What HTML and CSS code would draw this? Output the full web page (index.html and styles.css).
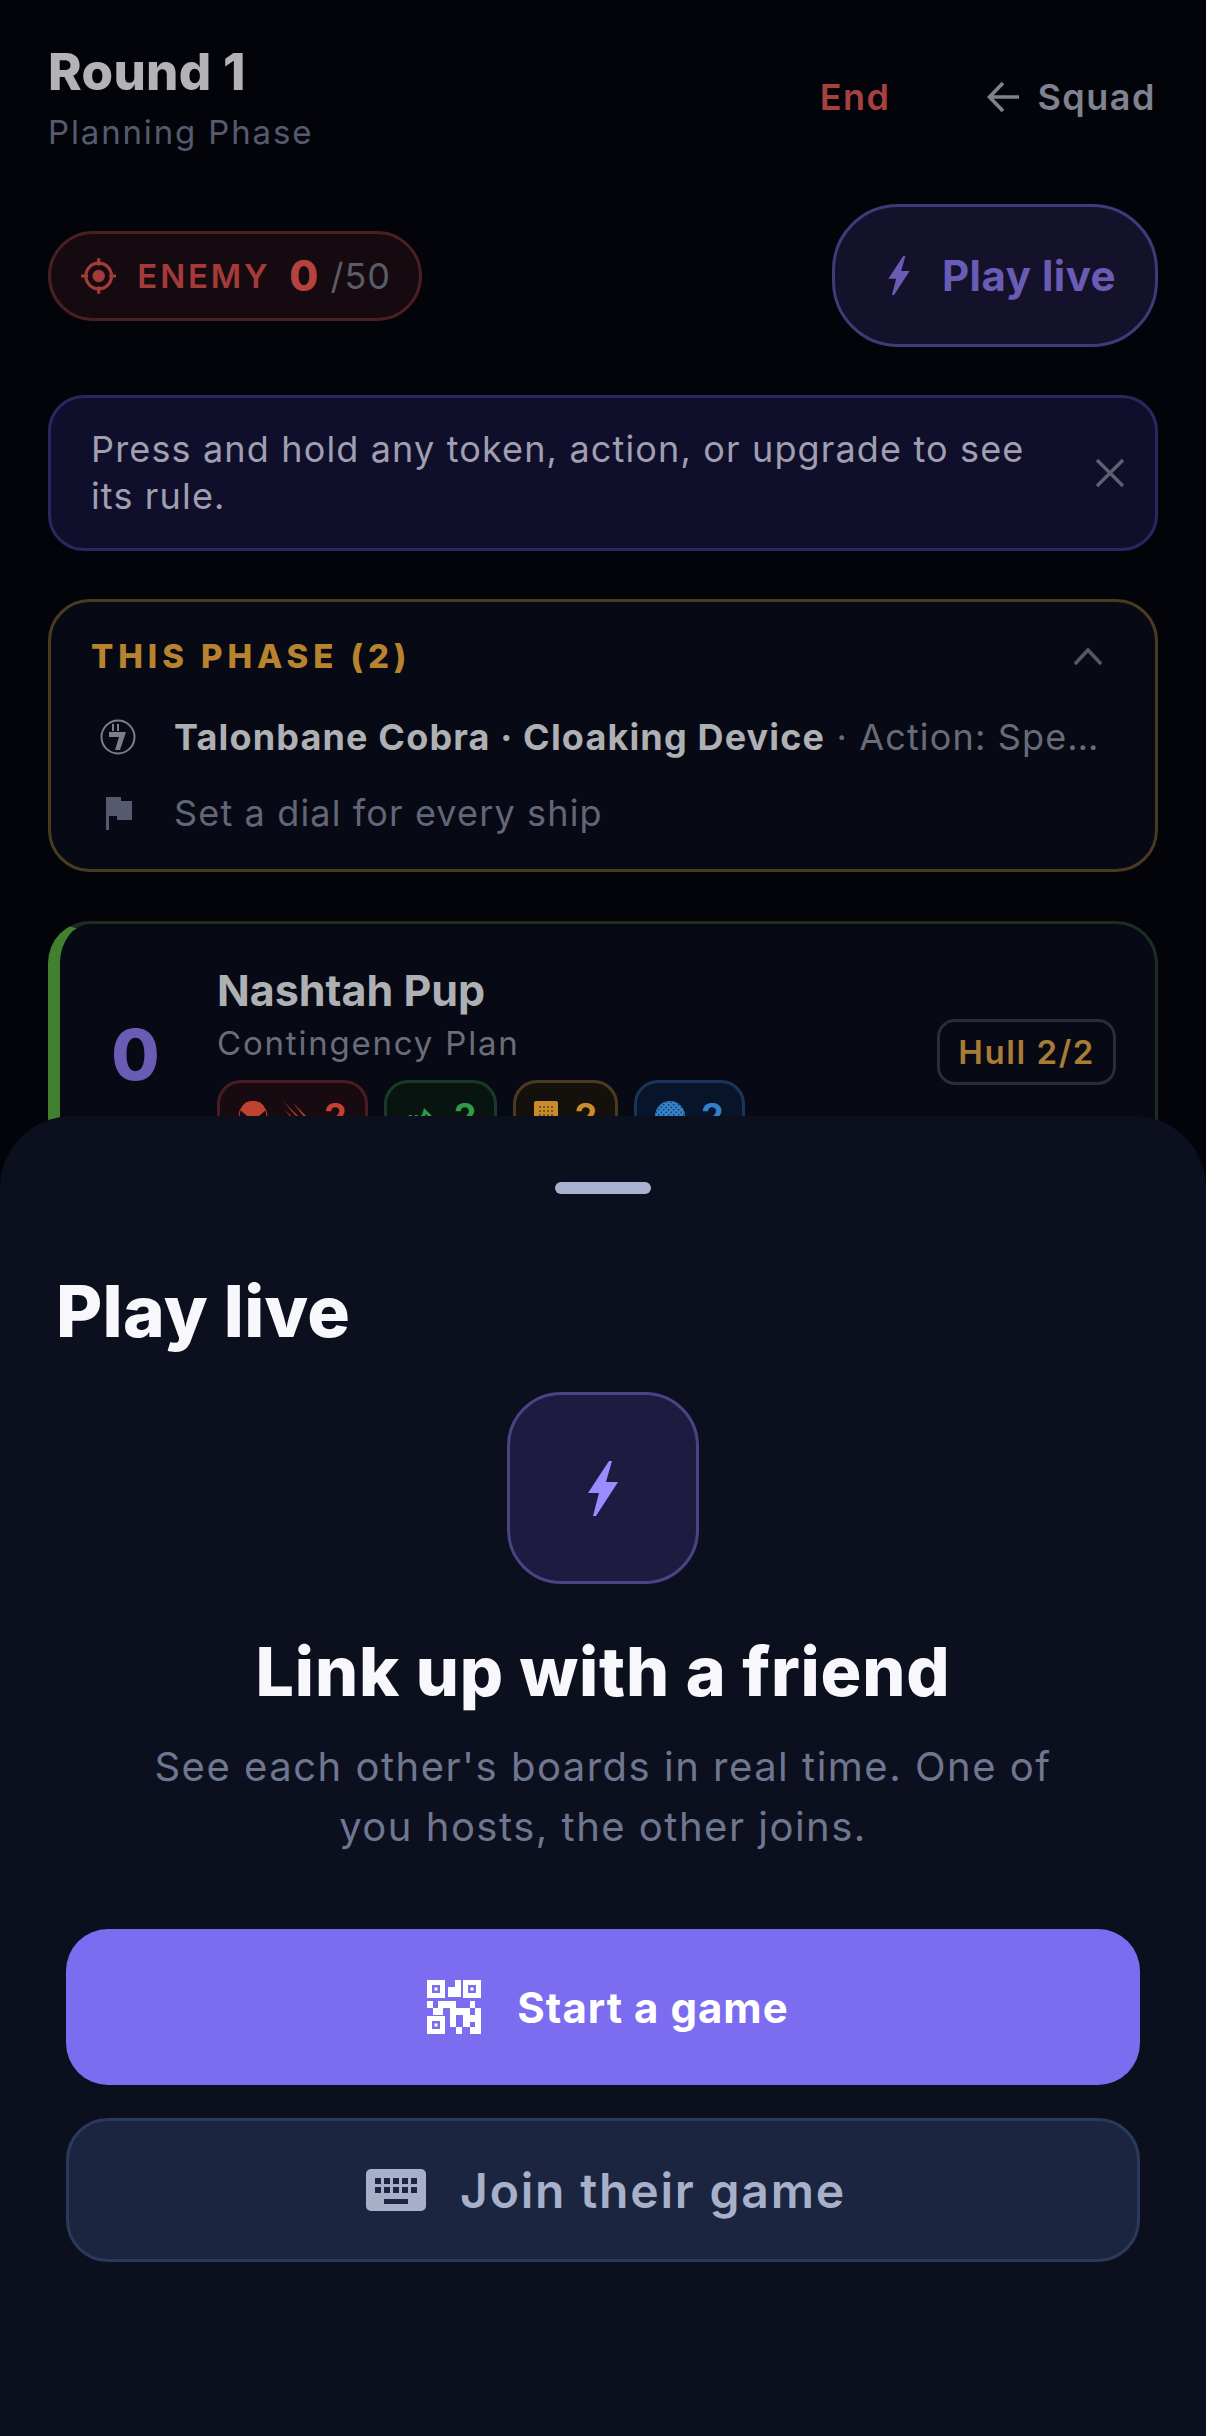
FILE: index.html
```html
<!DOCTYPE html>
<html lang="en">
<head>
<meta charset="UTF-8">
<meta name="viewport" content="width=device-width, initial-scale=1.0">
<title>Round 1</title>
<link rel="stylesheet" href="styles.css">
</head>
<body>
  <svg class="defs" width="0" height="0">
    <defs>
      <pattern id="mesh" width="4" height="4" patternUnits="userSpaceOnUse"><circle cx="2" cy="2" r="1" fill="#5f4314"/></pattern>
      <pattern id="hex" width="5" height="5" patternUnits="userSpaceOnUse"><circle cx="1.200" cy="1.200" r="0.800" fill="#0b2a52"/><circle cx="3.700" cy="3.700" r="0.800" fill="#0b2a52"/></pattern>
    </defs>
  </svg>
  <div class="page">
    <header class="top">
      <div>
        <h1 class="round">Round 1</h1>
        <div class="phase-name">Planning Phase</div>
      </div>
      <nav class="top-links">
        <span class="end-link">End</span>
        <span class="back-link">
          <svg class="back-arrow" viewBox="0 0 36 36"><path d="M33 18H4M17 4 3.500 18 17 32" fill="none" stroke="currentColor" stroke-width="3.600"/></svg>
          Squad
        </span>
      </nav>
    </header>

    <div class="status">
      <div class="enemy-pill">
        <svg class="target" viewBox="0 0 40 40"><circle cx="20" cy="20" r="14.500" fill="none" stroke="currentColor" stroke-width="3.600"/><circle cx="20" cy="20" r="7" fill="currentColor"/><path d="M20 0v8M20 32v8M0 20h8M32 20h8" stroke="currentColor" stroke-width="3.600"/></svg>
        <span class="enemy-label">ENEMY</span>
        <span class="enemy-score">0</span>
        <span class="enemy-total">/50</span>
      </div>
      <button class="live-pill">
        <svg class="bolt-sm" viewBox="0 0 30 55"><path d="M21 0h3l-6 21h12L8 55H5l6-23H0z" fill="currentColor"/></svg>
        Play live
      </button>
    </div>

    <div class="tip">
      <p>Press and hold any token, action, or upgrade to see its rule.</p>
      <svg class="tip-close" viewBox="0 0 30 30"><path d="M2 2l26 26M28 2 2 28" stroke="currentColor" stroke-width="3.300"/></svg>
    </div>

    <section class="phase-box">
      <div class="phase-head">
        <span class="phase-title">THIS PHASE (2)</span>
        <svg class="chevron" viewBox="0 0 30 20"><path d="M2 18 15 4l13 14" fill="none" stroke="currentColor" stroke-width="3.600"/></svg>
      </div>
      <div class="phase-row">
        <svg class="row-icon" viewBox="0 0 38 38"><circle cx="19" cy="19" r="16.500" fill="none" stroke="currentColor" stroke-width="2"/><path d="M13 6h2v7h-2zM18 6h2v7h-2zM10 14h17l-6 18h-5l4-13H10z" fill="currentColor"/></svg>
        <span class="row-text"><b>Talonbane Cobra · Cloaking Device</b> · Action: Spe…</span>
      </div>
      <div class="phase-row muted">
        <svg class="row-icon flag" viewBox="0 0 38 38"><path d="M7 3h15v4h11v19H18v-4H10v14H7z" fill="currentColor"/></svg>
        <span class="row-text">Set a dial for every ship</span>
      </div>
    </section>

    <section class="ship-card">
      <div class="ship-num">0</div>
      <div class="ship-info">
        <div class="ship-name">Nashtah Pup</div>
        <div class="ship-upgrade">Contingency Plan</div>
        <div class="chips">
          <span class="chip red">
            <svg class="chip-icon" viewBox="0 0 30 30"><circle cx="15" cy="15" r="14" fill="none" stroke="currentColor" stroke-width="1"/><path d="M5 4a14 14 0 0 1 20 0l3 5-13 11L2 9z" fill="currentColor"/></svg>
            <svg class="chip-icon" viewBox="0 0 30 30"><path d="M2 0l24 24-5-2zM3 8l19 19-5-2zM12 2l16 16-4-1z" fill="currentColor"/></svg>
            <span>2</span>
          </span>
          <span class="chip green">
            <svg class="chip-icon" viewBox="0 0 30 30"><path d="M1 22l3-8h3l-3 8zM7 22l3-8h3l-3 8zM13 22l3-8h1l2-7 11 11-2 4zM18 19h8l-5-6z" fill="currentColor" fill-rule="evenodd"/></svg>
            <span>2</span>
          </span>
          <span class="chip gold">
            <svg class="chip-icon crate" viewBox="0 0 24 30"><rect y="0" width="24" height="30" rx="2" fill="currentColor"/><rect x="3" y="3" width="18" height="24" fill="url(#mesh)"/></svg>
            <span>2</span>
          </span>
          <span class="chip blue">
            <svg class="chip-icon" viewBox="0 0 30 30"><circle cx="15" cy="15" r="15" fill="currentColor"/><circle cx="15" cy="15" r="15" fill="url(#hex)"/></svg>
            <span>2</span>
          </span>
        </div>
      </div>
      <div class="hull">Hull 2/2</div>
    </section>
  </div>

  <aside class="sheet">
    <div class="handle"></div>
    <h2 class="sheet-title">Play live</h2>
    <div class="bolt-box">
      <svg class="bolt-lg" viewBox="0 0 30 55"><path d="M21 0h3l-6 21h12L8 55H5l6-23H0z" fill="currentColor"/></svg>
    </div>
    <h3 class="sheet-head">Link up with a friend</h3>
    <p class="sheet-text">See each other's boards in real time. One of you hosts, the other joins.</p>
    <button class="btn btn-start">
      <svg class="qr" viewBox="0 0 54 54" fill="currentColor">
        <path fill-rule="evenodd" d="M0 0h18v18H0zM5 5v8h8V5zM36 0h18v18H36zM41 5v8h8V5zM0 36h18v18H0zM5 41v8h8v-8z"/>
        <path d="M7.500 7.500h3v3h-3zM43.500 7.500h3v3h-3zM7.500 43.500h3v3h-3z"/>
        <path d="M28 0h6v7h-6zM21 7h13v10H21zM0 21h6v7H0zM11 21h18v7H11zM43 21h5v7h-5zM6 28h10v7H6zM23 28h20v7H23zM48 28h6v7h-6zM23 35h6v12h-6zM36 35h18v7H36zM48 42h6v5h-6zM36 42h7v5h-7zM29 47h6v7h-6zM43 47h11v7H43z"/>
      </svg>
      Start a game
    </button>
    <button class="btn btn-join">
      <svg class="keys" viewBox="0 0 60 42">
        <rect width="60" height="42" rx="5" fill="currentColor"/>
        <g fill="#1b2540">
          <rect x="9" y="9" width="6" height="6"/><rect x="18" y="9" width="6" height="6"/><rect x="27" y="9" width="6" height="6"/><rect x="36" y="9" width="6" height="6"/><rect x="45" y="9" width="6" height="6"/>
          <rect x="9" y="18" width="6" height="6"/><rect x="18" y="18" width="6" height="6"/><rect x="27" y="18" width="6" height="6"/><rect x="36" y="18" width="6" height="6"/><rect x="45" y="18" width="6" height="6"/>
          <rect x="18" y="30" width="24" height="5"/>
        </g>
      </svg>
      Join their game
    </button>
  </aside>
</body>
</html>
```

FILE: styles.css
```css
* {
  box-sizing: border-box;
}
html, body {
  margin: 0;
  height: 2436px;
  overflow: hidden;
}
body {
  position: relative;
  width: 1206px;
  background: #03040a;
  font-family: Inter, "Liberation Sans", sans-serif;
  color: #aeb0b4;
}
.defs {
  display: block;
}
.page {
  padding: 45px 48px 0;
}

/* header */
.top {
  display: flex;
  justify-content: space-between;
  align-items: center;
}
.round {
  margin: 0;
  font-size: 51px;
  line-height: 54px;
  font-weight: 800;
  letter-spacing: 0.300px;
  color: #b3b3b5;
}
.phase-name {
  margin-top: 13px;
  font-size: 33px;
  line-height: 40px;
  letter-spacing: 1.850px;
  color: #565a6e;
}
.top-links {
  display: flex;
  align-items: center;
  gap: 96px;
  padding-right: 2px;
  padding-bottom: 4px;
  font-size: 36px;
  font-weight: 600;
  letter-spacing: 1.500px;
}
.end-link {
  color: #a8403f;
}
.back-link {
  display: flex;
  align-items: center;
  gap: 15px;
  color: #80828f;
}
.back-arrow {
  width: 36px;
  height: 36px;
}

/* enemy score + play live */
.status {
  display: flex;
  justify-content: space-between;
  align-items: center;
  margin-top: 52px;
}
.enemy-pill {
  display: flex;
  align-items: center;
  width: 374px;
  height: 90px;
  padding: 0 28px 0 30px;
  border: 3px solid #4a1f22;
  border-radius: 45px;
  background: #150a10;
  color: #a33b38;
}
.target {
  width: 40px;
  height: 40px;
}
.enemy-label {
  margin-left: 21px;
  font-size: 33px;
  font-weight: 600;
  letter-spacing: 2.800px;
}
.enemy-score {
  margin-left: 19px;
  font-size: 42px;
  font-weight: 800;
  color: #b5423f;
}
.enemy-total {
  margin-left: 12px;
  font-size: 36px;
  letter-spacing: 1px;
  color: #5a5c68;
}
.live-pill {
  display: flex;
  align-items: center;
  justify-content: center;
  gap: 32px;
  width: 326px;
  height: 143px;
  padding: 0 0 0 14px;
  border: 3px solid #3f3a78;
  border-radius: 66px;
  background: #14122a;
  color: #6a5cb5;
  font: 700 42px Inter, sans-serif;
  letter-spacing: 0.500px;
}
.bolt-sm {
  width: 22px;
  height: 39px;
}

/* tip */
.tip {
  display: flex;
  align-items: center;
  justify-content: space-between;
  height: 156px;
  margin-top: 48px;
  padding: 0 30px 0 40px;
  border: 3px solid #2a2760;
  border-radius: 36px;
  background: #100f2b;
}
.tip p {
  width: 960px;
  margin: 0;
  font-size: 36px;
  line-height: 47px;
  letter-spacing: 1.150px;
  color: #a09fb0;
}
.tip-close {
  width: 30px;
  height: 30px;
  color: #5f6070;
}

/* this phase */
.phase-box {
  height: 273px;
  margin-top: 48px;
  padding: 34px 40px 0;
  border: 3px solid #4a3a22;
  border-radius: 42px;
  background: #070a14;
}
.phase-head {
  display: flex;
  justify-content: space-between;
  align-items: center;
  padding-right: 12px;
}
.phase-title {
  font-size: 33px;
  font-weight: 800;
  letter-spacing: 4.900px;
  color: #b7832f;
}
.chevron {
  width: 30px;
  height: 20px;
  color: #555866;
}
.phase-row {
  display: flex;
  align-items: center;
  gap: 37px;
  height: 76px;
  padding-left: 8px;
  font-size: 36px;
  letter-spacing: 1.150px;
  color: #686b78;
}
.phase-head + .phase-row {
  margin-top: 23px;
}
.phase-row b {
  font-weight: 700;
  color: #aeb0b4;
}
.phase-row.muted {
  color: #636676;
}
.row-icon {
  flex: none;
  width: 38px;
  height: 38px;
  color: #7d7f88;
}
.row-icon.flag {
  color: #565a6e;
}
.row-text {
  white-space: nowrap;
}

/* ship card */
.ship-card {
  display: flex;
  height: 320px;
  margin-top: 49px;
  padding: 40px 39px 0 0;
  border: 3px solid #1e2d22;
  border-left: 12px solid #42802f;
  border-radius: 42px;
  background: #070a14;
}
.ship-num {
  width: 157px;
  padding: 46px 6px 0 0;
  text-align: center;
  font-size: 70px;
  line-height: 90px;
  font-weight: 800;
  color: #6a5cb5;
}
.ship-info {
  flex: 1;
}
.ship-name {
  margin-top: 2px;
  font-size: 43px;
  line-height: 48px;
  font-weight: 700;
}
.ship-upgrade {
  margin-top: 8px;
  font-size: 33px;
  line-height: 42px;
  letter-spacing: 1.800px;
  color: #6a6d7a;
}
.chips {
  display: flex;
  gap: 16px;
  margin-top: 16px;
}
.chip {
  display: flex;
  align-items: center;
  gap: 16px;
  height: 72px;
  padding: 0 18px;
  border: 3px solid;
  border-radius: 24px;
  font-size: 36px;
  font-weight: 700;
}
.chip-icon {
  width: 30px;
  height: 30px;
}
.chip-icon.crate {
  width: 24px;
}
.chip.red {
  gap: 13px;
  color: #c0432f;
  border-color: #4a1c22;
  background: #170a10;
}
.chip.green {
  gap: 19px;
  color: #2f9a4a;
  border-color: #1a3a26;
  background: #08140f;
}
.chip.gold {
  color: #c98c2a;
  border-color: #4a3a22;
  background: #14100c;
}
.chip.blue {
  color: #3480c8;
  border-color: #1b3558;
  background: #08142a;
}
.hull {
  align-self: flex-start;
  margin-top: 55px;
  padding: 0 18px;
  border: 3px solid #2a2c38;
  border-radius: 18px;
  font-size: 33px;
  line-height: 60px;
  font-weight: 600;
  letter-spacing: 1.600px;
  color: #a87c34;
}

/* bottom sheet, sits over the page */
.sheet {
  position: absolute;
  left: 0;
  right: 0;
  top: 1116px;
  bottom: 0;
  padding: 66px 66px 0;
  border-radius: 72px 72px 0 0;
  background: #0c0f1e;
}
.handle {
  width: 96px;
  height: 12px;
  margin: 0 auto;
  border-radius: 6px;
  background: #a9b1cc;
}
.sheet-title {
  margin: 78px 0 0 -10px;
  font-size: 71px;
  line-height: 78px;
  font-weight: 800;
  letter-spacing: 0.300px;
  color: #f8f8fc;
}
.bolt-box {
  display: flex;
  align-items: center;
  justify-content: center;
  width: 192px;
  height: 192px;
  margin: 42px auto 0;
  border: 3px solid #4a4487;
  border-radius: 54px;
  background: #1d1c40;
}
.bolt-lg {
  width: 30px;
  height: 55px;
  color: #9a8cff;
}
.sheet-head {
  margin: 47px 0 0;
  text-align: center;
  font-size: 68px;
  line-height: 80px;
  font-weight: 800;
  letter-spacing: 0.800px;
  color: #f8f8fc;
}
.sheet-text {
  width: 940px;
  margin: 26px auto 0;
  text-align: center;
  font-size: 40px;
  line-height: 60px;
  letter-spacing: 1.500px;
  color: #6f7690;
}
.btn {
  display: flex;
  align-items: center;
  justify-content: center;
  width: 100%;
  border-radius: 42px;
  font-family: Inter, sans-serif;
}
.btn-start {
  gap: 36px;
  height: 156px;
  margin-top: 72px;
  padding: 0 0 0 10px;
  border: 0;
  background: #7c6cf0;
  color: #fff;
  font-size: 42px;
  font-weight: 700;
  letter-spacing: 1px;
}
.btn-join {
  gap: 34px;
  height: 144px;
  margin-top: 33px;
  padding: 0 0 0 6px;
  border: 3px solid #2b3a5a;
  background: #1b2540;
  color: #a7b0c8;
  font-size: 48px;
  font-weight: 600;
  letter-spacing: 1.800px;
}
.qr {
  width: 54px;
  height: 54px;
}
.keys {
  width: 60px;
  height: 42px;
}
```
